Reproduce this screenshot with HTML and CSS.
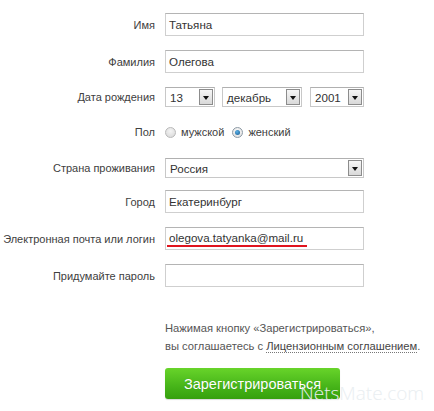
FILE: index.html
```html
<!DOCTYPE html>
<html lang="ru">
<head>
<meta charset="utf-8">
<title>Регистрация</title>
<link rel="stylesheet" href="styles.css">
</head>
<body>
<div class="form">
  <div class="row r-name">
    <div class="label">Имя</div>
    <div class="field text">Татьяна</div>
  </div>
  <div class="row r-gap">
    <div class="label">Фамилия</div>
    <div class="field text">Олегова</div>
  </div>
  <div class="row r-date">
    <div class="label">Дата рождения</div>
    <div class="dates">
      <div class="select s-day"><span>13</span><span class="arrow"></span></div>
      <div class="select s-month"><span>декабрь</span><span class="arrow"></span></div>
      <div class="select s-year"><span>2001</span><span class="arrow"></span></div>
    </div>
  </div>
  <div class="row r-sex">
    <div class="label">Пол</div>
    <div class="radios">
      <span class="radio"></span><span class="rtext">мужской</span>
      <span class="radio checked"></span><span class="rtext">женский</span>
    </div>
  </div>
  <div class="row r-country">
    <div class="label">Страна проживания</div>
    <div class="select s-country"><span>Россия</span><span class="arrow"></span></div>
  </div>
  <div class="row r-city">
    <div class="label">Город</div>
    <div class="field text">Екатеринбург</div>
  </div>
  <div class="row r-gap">
    <div class="label">Электронная почта или логин</div>
    <div class="field text"><span class="mark">olegova.tatyanka@mail.ru</span></div>
  </div>
  <div class="row r-gap">
    <div class="label">Придумайте пароль</div>
    <div class="field text"></div>
  </div>
  <div class="actions">
    <p class="notice">Нажимая кнопку «Зарегистрироваться»,<br>вы соглашаетесь с <a class="link" href="#">Лицензионным соглашением</a>.</p>
    <button class="submit" type="button">Зарегистрироваться</button>
  </div>
</div>
<div class="watermark">NetsMate.com</div>
</body>
</html>
```
FILE: styles.css
```css
html, body {
  margin: 0;
  padding: 0;
  background: #fff;
}
body {
  width: 434px;
  height: 411px;
  position: relative;
  overflow: hidden;
  font-family: Arial, "Liberation Sans", sans-serif;
}
.form {
  padding-top: 13px;
}
.row {
  display: grid;
  grid-template-columns: 155px 199px;
  column-gap: 10px;
  align-items: center;
}
.r-gap { margin-top: 14px; }
.r-date { margin-top: 14px; }
.r-sex { margin-top: 18px; }
.r-country { margin-top: 19px; }
.r-city { margin-top: 12px; }
.label {
  text-align: right;
  font-size: 11px;
  color: #404040;
  white-space: nowrap;
}
.field {
  box-sizing: border-box;
  height: 23px;
  border: 1px solid #cfcfcf;
  border-top-color: #b4b4b4;
  display: flex;
  align-items: center;
  padding-left: 3px;
  font-size: 11.6px;
  color: #333;
}
.mark {
  border-bottom: 2px solid #e0141e;
  line-height: 12px;
  padding-bottom: 1px;
  margin-top: 1px;
  padding-right: 4px;
  margin-left: -2px;
  padding-left: 2px;
}
.dates {
  display: flex;
  gap: 7px;
}
.s-month { margin-right: 1px; }
.select {
  box-sizing: border-box;
  height: 20px;
  border: 1px solid #c8c8c8;
  border-top-color: #b0b0b0;
  display: flex;
  align-items: center;
  justify-content: space-between;
  padding: 0 1px 0 4px;
  font-size: 11.6px;
  color: #333;
}
.s-day { width: 50px; }
.s-month { width: 80px; }
.s-year { width: 54px; }
.arrow {
  box-sizing: border-box;
  width: 14px;
  height: 16px;
  border: 1px solid #8c8c8c;
  background: linear-gradient(#f6f6f6, #d9d9d9);
  display: flex;
  align-items: center;
  justify-content: center;
}
.arrow::after {
  content: "";
  border-left: 3px solid transparent;
  border-right: 3px solid transparent;
  border-top: 4px solid #111;
  margin-top: 1px;
}
.radios {
  display: flex;
  align-items: center;
  height: 14px;
  font-size: 11px;
  color: #404040;
}
.radio {
  box-sizing: border-box;
  width: 11px;
  height: 11px;
  border-radius: 50%;
  border: 1px solid #b9b9b9;
  background: radial-gradient(circle at 50% 35%, #f4f4f4, #d6d6d6);
  margin-right: 5px;
  position: relative;
}
.radio.checked {
  border-color: #8d9aa5;
  background: radial-gradient(circle at 50% 35%, #fafafa, #dcdcdc);
  margin-left: 8px;
}
.radio.checked::after {
  content: "";
  position: absolute;
  left: 2px;
  top: 2px;
  width: 5px;
  height: 5px;
  border-radius: 50%;
  background: radial-gradient(circle at 40% 35%, #5ab0e6, #14588f);
}
.actions {
  margin-left: 165px;
  margin-top: 32px;
}
.notice {
  margin: 0;
  font-size: 11.2px;
  line-height: 18px;
  color: #555;
  white-space: nowrap;
}
.link {
  color: #444;
  text-decoration: none;
  border-bottom: 1px dotted #777;
}
.submit {
  display: block;
  margin-top: 13px;
  width: 175px;
  height: 31px;
  border: 0;
  border-radius: 3px;
  background: linear-gradient(#68d42a, #46b419 60%, #36a00d);
  box-shadow: 0 1px 1px rgba(0,0,0,0.15);
  color: #fff;
  font-family: Arial, "Liberation Sans", sans-serif;
  font-size: 14.5px;
  text-shadow: 0 0 1px rgba(0,60,0,0.25);
  padding: 0;
  cursor: pointer;
}
.watermark {
  position: absolute;
  left: 300px;
  top: 382px;
  font-family: "Open Sans", Arial, sans-serif;
  font-weight: 300;
  font-size: 19px;
  line-height: 22px;
  white-space: nowrap;
  color: #e9eef1;
  pointer-events: none;
}
```
